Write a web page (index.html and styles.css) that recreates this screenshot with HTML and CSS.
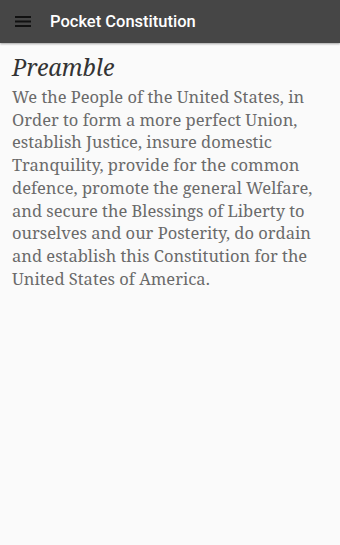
FILE: index.html
```html
<!DOCTYPE html>
<html lang="en">
<head>
    <meta charset="UTF-8">
    <meta name="viewport" content="width=device-width, initial-scale=1.0">
    <title>Pocket Constitution</title>
    <link rel="stylesheet" href="styles.css">
</head>
<body>
    <header class="toolbar">
        <svg class="menu-icon" width="16" height="11" viewBox="0 0 16 11">
            <rect x="0" y="0" width="16" height="2" fill="#111"/>
            <rect x="0" y="4.5" width="16" height="2" fill="#111"/>
            <rect x="0" y="9" width="16" height="2" fill="#111"/>
        </svg>
        <h1>Pocket Constitution</h1>
    </header>

    <main class="content">
        <h2>Preamble</h2>
        <p>We the People of the United States, in Order to form a more perfect Union, establish Justice, insure domestic Tranquility, provide for the common defence, promote the general Welfare, and secure the Blessings of Liberty to ourselves and our Posterity, do ordain and establish this Constitution for the United States of America.</p>
    </main>
</body>
</html>
```

FILE: styles.css
```css
body {
    margin: 0;
    padding: 0;
    background-color: #fafafa;
    font-family: "Noto Serif", "DejaVu Serif", serif;
}
.toolbar {
    height: 43px;
    background-color: #464646;
    display: flex;
    align-items: center;
    padding-left: 15px;
    box-shadow: 0 1px 2px rgba(0, 0, 0, 0.35);
}
.menu-icon {
    margin-right: 19px;
}
.toolbar h1 {
    margin: 0;
    color: white;
    font-family: Roboto, "Noto Sans", sans-serif;
    font-weight: 500;
    font-size: 16.5px;
}
.content {
    padding: 0 12px;
}
.content h2 {
    margin: 8px 0 3px;
    font-style: italic;
    font-weight: normal;
    font-size: 23.3px;
    color: #333;
}
.content p {
    margin: 0;
    font-size: 16.5px;
    line-height: 22.7px;
    color: #6a6a6a;
}
```
